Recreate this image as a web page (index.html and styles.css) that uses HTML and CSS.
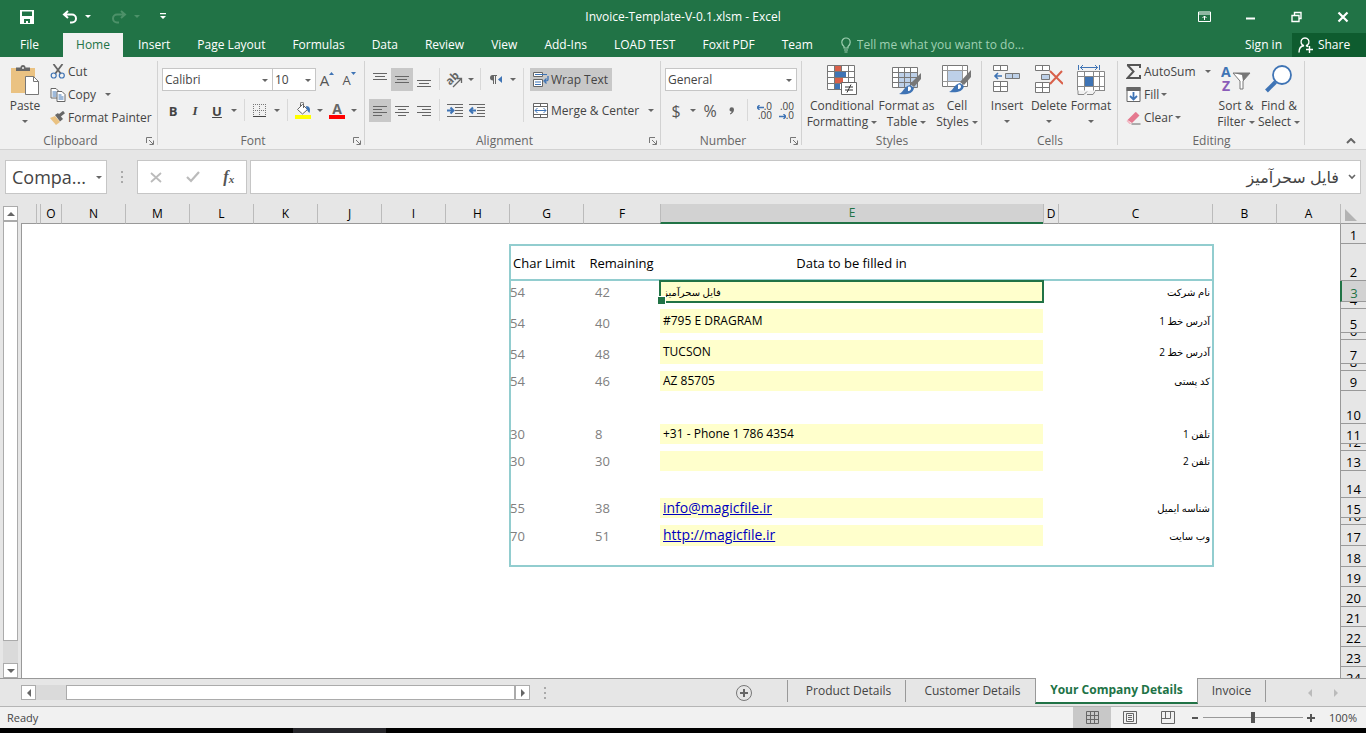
FILE: index.html
```html
<!DOCTYPE html>
<html lang="en">
<head>
    <meta charset="UTF-8">
    <meta name="viewport" content="width=device-width, initial-scale=1.0">
    <title>Invoice-Template-V-0.1.xlsm - Excel</title>
    <link rel="stylesheet" href="styles.css">
</head>
<body>
    <header class="titlebar">
        <div class="quick-access">
            <button class="tb-btn" aria-label="Save">
                <svg width="14" height="14" viewBox="0 0 14 14"><path d="M0 0h14v14H0z M2 1.500v4.500h10V1.500z M4 9v4h2v-2h2v2h2V9z" fill="#fff" fill-rule="evenodd"/></svg>
            </button>
            <button class="tb-btn undo" aria-label="Undo">
                <svg width="16" height="14" viewBox="0 0 16 14"><path d="M6 1L2 4.500l4 3.500M2 4.500h8a4 4 0 0 1 0 8H8" fill="none" stroke="#fff" stroke-width="2"/></svg>
                <i class="caret light"></i>
            </button>
            <button class="tb-btn redo" aria-label="Redo" disabled>
                <svg width="16" height="14" viewBox="0 0 16 14"><path d="M10 1l4 3.500L10 8M14 4.500H6a4 4 0 0 0 0 8h2" fill="none" stroke="#4d9169" stroke-width="2"/></svg>
                <i class="caret faint"></i>
            </button>
            <button class="tb-btn" aria-label="Customize Quick Access Toolbar">
                <svg width="7" height="7" viewBox="0 0 7 7"><path d="M0 0h6v1.300H0zM0 3h6L3 6z" fill="#fff"/></svg>
            </button>
        </div>
        <h1>Invoice-Template-V-0.1.xlsm - Excel</h1>
        <div class="window-buttons">
            <button aria-label="Ribbon Display Options">
                <svg width="14" height="12" viewBox="0 0 14 12"><path d="M.5 1h12v9.500H.5zM.5 3h12M6.500 9V5M4.500 7l2-2 2 2" fill="none" stroke="#fff"/></svg>
            </button>
            <button aria-label="Minimize">
                <svg width="10" height="12" viewBox="0 0 10 12"><path d="M0 7.500h9" stroke="#fff" stroke-width="2"/></svg>
            </button>
            <button aria-label="Restore">
                <svg width="12" height="12" viewBox="0 0 12 12"><path d="M1 4.500h7v6H1zM3.500 4V1.500H10v6H8.500" fill="none" stroke="#fff" stroke-width="1.400"/></svg>
            </button>
            <button aria-label="Close">
                <svg width="12" height="12" viewBox="0 0 12 12"><path d="M1.500 1.500l9 9M10.500 1.500l-9 9" stroke="#fff" stroke-width="2.200"/></svg>
            </button>
        </div>
    </header>

    <nav class="ribbon-tabs">
        <a href="#file" class="file">File</a>
        <a href="#home" class="active">Home</a>
        <a href="#insert">Insert</a>
        <a href="#layout">Page Layout</a>
        <a href="#formulas">Formulas</a>
        <a href="#data">Data</a>
        <a href="#review">Review</a>
        <a href="#view">View</a>
        <a href="#addins">Add-Ins</a>
        <a href="#load">LOAD TEST</a>
        <a href="#foxit">Foxit PDF</a>
        <a href="#team">Team</a>
        <label class="tell-me">
            <svg width="10" height="16" viewBox="0 0 10 16"><path d="M3 11V9.500C1.500 8.500.8 7 .8 5.200a4.200 4.200 0 0 1 8.400 0C9.200 7 8.500 8.500 7 9.500V11zM3 13h4M3.500 15h3" fill="none" stroke="#9fd0b2" stroke-width="1.200"/></svg>
            <input type="text" placeholder="Tell me what you want to do...">
        </label>
        <a href="#signin" class="signin">Sign in</a>
        <button class="share">
            <svg width="16" height="16" viewBox="0 0 16 16"><path d="M1 15.500C1 11 3 9 6 8.800a4 4 0 1 1 2 0c1 .2 1.700.6 2.200 1M8 12.500h7M11.500 9v7" fill="none" stroke="#fff" stroke-width="1.400"/></svg>
            Share
        </button>
    </nav>

    <section class="ribbon">
        <div class="group clipboard">
            <div class="tools">
                <button class="big paste">
                    <svg width="28" height="30" viewBox="0 0 28 30"><path d="M0 3h24v25H0z" fill="#eac282"/><path d="M5 6V2.500h4.500a2.500 2.500 0 0 1 5 0H19V6z" fill="#666"/><circle cx="12" cy="3" r="1" fill="#f1f1f1"/><path d="M14.500 11.500h8l5 5v13h-13z" fill="#fff" stroke="#777"/><path d="M22.500 11.500v5h5" fill="none" stroke="#777"/></svg>
                    <span>Paste</span>
                    <i class="caret"></i>
                </button>
                <div class="stack">
                    <button class="small">
                        <svg width="15" height="15" viewBox="0 0 15 15"><path d="M3 0l7.500 10M12 0L4.500 10" stroke="#666" stroke-width="1.800"/><circle cx="3.200" cy="11.500" r="2.500" fill="none" stroke="#3f74b5" stroke-width="1.200"/><circle cx="11.300" cy="11.500" r="2.500" fill="none" stroke="#3f74b5" stroke-width="1.200"/></svg>
                        Cut
                    </button>
                    <button class="small">
                        <svg width="15" height="14" viewBox="0 0 15 14"><path d="M.5.5h5l2.500 2.500v7H.5z" fill="#fff" stroke="#666"/><path d="M2 4h4M2 6h4M2 8h4" stroke="#3f74b5"/><path d="M6.500 3.500h5l3 3v7h-8z" fill="#fff" stroke="#666"/><path d="M8 7h3M8 9h5M8 11h5" stroke="#3f74b5"/></svg>
                        Copy <i class="caret copy-caret"></i>
                    </button>
                    <button class="small">
                        <svg width="16" height="14" viewBox="0 0 16 14"><path d="M0 7l5-2 5 6-4 3z" fill="#eac282"/><path d="M5 4l3-2 5 6-3 2.500z" fill="#666"/><path d="M9 5l5-4" stroke="#666" stroke-width="3"/></svg>
                        Format Painter
                    </button>
                </div>
            </div>
            <footer>Clipboard<svg class="launcher" viewBox="0 0 8 8"><path d="M.5 6V.5H6M3 3l4 4M7.500 3.500v4h-4" fill="none" stroke="#777"/></svg></footer>
        </div>

        <div class="group font">
            <div class="rows">
                <div class="row">
                    <label class="select font-name"><select aria-label="Font"><option>Calibri</option></select></label>
                    <label class="select font-size"><select aria-label="Font size"><option>10</option></select></label>
                    <button class="icon grow" aria-label="Increase Font Size"><span class="big-a">A</span><svg width="5" height="3" viewBox="0 0 5 3"><path d="M0 3h5L2.500 0z" fill="#3f74b5"/></svg></button>
                    <button class="icon grow" aria-label="Decrease Font Size"><span class="small-a">A</span><svg width="5" height="3" viewBox="0 0 5 3"><path d="M0 0h5L2.500 3z" fill="#3f74b5"/></svg></button>
                </div>
                <div class="row">
                    <button class="icon"><b>B</b></button>
                    <button class="icon"><em>I</em></button>
                    <button class="icon"><u>U</u></button>
                    <button class="drop" aria-label="Underline options"><i class="caret"></i></button>
                    <hr>
                    <button class="icon" aria-label="Borders">
                        <svg width="14" height="14" viewBox="0 0 14 14"><path d="M.5 0v13M6.500 0v13M12.500 0v13M0 .5h13M0 6.500h13" stroke="#777" stroke-dasharray="1 1"/><path d="M0 12.500h13" stroke="#444"/></svg>
                    </button>
                    <button class="drop" aria-label="Border options"><i class="caret"></i></button>
                    <hr>
                    <button class="icon" aria-label="Fill Color">
                        <svg width="16" height="17" viewBox="0 0 16 17"><path d="M2.500 7.500l5-5 5 5-5 4.500z" fill="#fff" stroke="#666"/><path d="M5.500 5V1.500a1.500 1.500 0 0 1 3 0V6" fill="none" stroke="#666"/><path d="M11 4c4 0 4.500 3 3.500 7-1-1-2-2-3-4z" fill="#3f74b5"/><path d="M0 13h16v4H0z" fill="#ff0"/></svg>
                    </button>
                    <button class="drop" aria-label="Fill options"><i class="caret"></i></button>
                    <button class="icon font-color" aria-label="Font Color">A</button>
                    <button class="drop" aria-label="Font Color options"><i class="caret"></i></button>
                </div>
            </div>
            <footer>Font<svg class="launcher" viewBox="0 0 8 8"><path d="M.5 6V.5H6M3 3l4 4M7.500 3.500v4h-4" fill="none" stroke="#777"/></svg></footer>
        </div>

        <div class="group alignment">
            <div class="tools">
                <div class="rows">
                    <div class="row">
                        <button class="icon" aria-label="Top Align"><svg width="14" height="16" viewBox="0 0 14 16"><path d="M0 1.500h14M2 4.500h10M0 7.500h14" stroke="#666"/></svg></button>
                        <button class="icon on" aria-label="Middle Align"><svg width="14" height="16" viewBox="0 0 14 16"><path d="M0 4.500h14M2 7.500h10M0 10.500h14" stroke="#666"/></svg></button>
                        <button class="icon" aria-label="Bottom Align"><svg width="14" height="16" viewBox="0 0 14 16"><path d="M0 8.500h14M2 11.500h10M0 14.500h14" stroke="#666"/></svg></button>
                        <hr>
                        <button class="icon" aria-label="Orientation"><svg width="20" height="20" viewBox="0 0 20 20"><text x="1" y="14" transform="rotate(-45 5 10)" class="orient">ab</text><path d="M8 17l8-8M12 8.500H16.500V13" fill="none" stroke="#666" stroke-width="1.300"/></svg></button>
                        <button class="drop narrow" aria-label="Orientation options"><i class="caret"></i></button>
                        <hr>
                        <button class="icon" aria-label="Text Direction"><svg width="14" height="10" viewBox="0 0 14 10"><path d="M3.500 0H8v1H7v8H6V1H5v8H4V5.500C2 5.500 1 4.500 1 2.800S2 0 3.500 0z" fill="#666"/><path d="M13 1v7L9 4.500z" fill="#3f74b5"/></svg></button>
                        <button class="drop" aria-label="Text Direction options"><i class="caret"></i></button>
                    </div>
                    <div class="row">
                        <button class="icon on" aria-label="Align Left"><svg width="14" height="12" viewBox="0 0 14 12"><path d="M0 1.500h14M0 4.500h9M0 7.500h14M0 10.500h9" stroke="#666"/></svg></button>
                        <button class="icon" aria-label="Center"><svg width="14" height="12" viewBox="0 0 14 12"><path d="M0 1.500h14M3 4.500h8M0 7.500h14M3 10.500h8" stroke="#666"/></svg></button>
                        <button class="icon" aria-label="Align Right"><svg width="14" height="12" viewBox="0 0 14 12"><path d="M0 1.500h14M5 4.500h9M0 7.500h14M5 10.500h9" stroke="#666"/></svg></button>
                        <hr>
                        <button class="icon" aria-label="Decrease Indent"><svg width="16" height="13" viewBox="0 0 16 13"><path d="M0 .5h16M8 3.500h8M8 6.500h8M8 9.500h8M0 12.500h16" stroke="#666"/><path d="M0 6.500h6M3.500 3.500l3 3-3 3" fill="none" stroke="#3f74b5" stroke-width="2"/></svg></button>
                        <button class="icon" aria-label="Increase Indent"><svg width="16" height="13" viewBox="0 0 16 13"><path d="M0 .5h16M8 3.500h8M8 6.500h8M8 9.500h8M0 12.500h16" stroke="#666"/><path d="M1 6.500h6M4 3.500l-3 3 3 3" fill="none" stroke="#3f74b5" stroke-width="2"/></svg></button>
                    </div>
                </div>
                <hr class="long">
                <div class="rows wide">
                    <button class="small on">
                        <svg width="16" height="15" viewBox="0 0 16 15"><path d="M.5.5h9v4h-9zM.5 7.500h9v7h-9z" fill="#fff" stroke="#666"/><path d="M2 2.500h12M2 10h6M2 12.500h6" stroke="#3f74b5"/><path d="M15 4v3.500c0 1-1 1.500-3 1.500M13.500 6.500L11 9l2.500 2.500" fill="none" stroke="#3f74b5" stroke-width="1.300"/></svg>
                        Wrap Text
                    </button>
                    <button class="small">
                        <svg width="16" height="15" viewBox="0 0 16 15"><path d="M.5.5h14v14H.5zM.5 3.500h14M.5 11.500h14M7.500.5v3M7.500 11.500v3" fill="#fff" stroke="#666"/><path d="M2 7.500h11M4.500 5l-2.500 2.500L4.500 10M10.500 5l2.500 2.500-2.500 2.500" fill="none" stroke="#3f74b5"/></svg>
                        Merge &amp; Center <i class="caret merge-caret"></i>
                    </button>
                </div>
            </div>
            <footer>Alignment<svg class="launcher" viewBox="0 0 8 8"><path d="M.5 6V.5H6M3 3l4 4M7.500 3.500v4h-4" fill="none" stroke="#777"/></svg></footer>
        </div>

        <div class="group number">
            <div class="rows">
                <div class="row">
                    <label class="select format"><select aria-label="Number format"><option>General</option></select></label>
                </div>
                <div class="row">
                    <button class="icon sign">$</button>
                    <button class="drop" aria-label="Accounting options"><i class="caret"></i></button>
                    <button class="icon sign">%</button>
                    <button class="icon" aria-label="Comma Style"><svg width="6" height="8" viewBox="0 0 6 8"><path d="M.5 2.500a2 2 0 0 1 4.500 0C5 5 3.500 6.500 1 7.500v-1c1-.5 1.500-1 1.500-2C1 4.500.5 3.500.5 2.500z" fill="#666"/></svg></button>
                    <hr>
                    <button class="icon decimal" aria-label="Increase Decimal">
                        <span><svg width="7" height="5" viewBox="0 0 7 5"><path d="M0 2.500h7M2.500 0L0 2.500 2.500 5" fill="none" stroke="#3f74b5" stroke-width="1.300"/></svg>.0</span><span>.00</span>
                    </button>
                    <button class="icon decimal" aria-label="Decrease Decimal">
                        <span>.00</span><span><svg width="7" height="5" viewBox="0 0 7 5"><path d="M0 2.500h7M4.500 0L7 2.500 4.500 5" fill="none" stroke="#3f74b5" stroke-width="1.300"/></svg>.0</span>
                    </button>
                </div>
            </div>
            <footer>Number<svg class="launcher" viewBox="0 0 8 8"><path d="M.5 6V.5H6M3 3l4 4M7.500 3.500v4h-4" fill="none" stroke="#777"/></svg></footer>
        </div>

        <div class="group styles">
            <div class="tools">
                <button class="big conditional">
                    <svg width="30" height="30" viewBox="0 0 30 30"><path d="M.5.5h27v24H.5z" fill="#fff"/><path d="M8 1h6v5H8zM8 13h8v5H8z" fill="#d9604a"/><path d="M8 7h11v5H8zM8 19h5v5H8z" fill="#3f74b5"/><path d="M.5.5h27v24H.5zM.5 6.500h27M.5 12.500h27M.5 18.500h27M7.500.5v24M14.500.5v6M21.500.5v24" fill="none" stroke="#777"/><path d="M14.500 17.500h15v12h-15z" fill="#fff" stroke="#666"/><path d="M18 22h8M18 25h8M24 19.500l-4 8" stroke="#333"/></svg>
                    <span>Conditional</span>
                    <span>Formatting <i class="caret"></i></span>
                </button>
                <button class="big format-table">
                    <svg width="30" height="30" viewBox="0 0 30 30"><path d="M.5 2.500h25v20H.5z" fill="#fff"/><path d="M7 8h18v14H7z" fill="#bdd0e8"/><path d="M.5 2.500h25v20H.5zM.5 7.500h25M.5 12.500h25M.5 17.500h25M6.500 2.500v20M12.500 2.500v20M18.500 2.500v20" fill="none" stroke="#777"/><path d="M29 8v6l-7 8-4-3z" fill="#777"/><path d="M18 20l4 3c-1 6-8 7-15 6 4-1 5-8 11-9z" fill="#3f74b5"/><path d="M16 22c2-1 3 0 3 2-1 2-2 2-3 2z" fill="#fff"/></svg>
                    <span>Format as</span>
                    <span>Table <i class="caret"></i></span>
                </button>
                <button class="big cell-styles">
                    <svg width="30" height="30" viewBox="0 0 30 30"><path d="M.5.5h25v21H.5z" fill="#fff" stroke="#777"/><path d="M6 6h14v10H6z" fill="#bdd0e8"/><path d="M.5 5.500h25M.5 16.500h25M5.500.5v21M20.500.5v21" stroke="#999"/><path d="M29 5v7l-7 8-4-3z" fill="#777"/><path d="M18 18l4 3c-1 6-8 7-15 6 4-1 5-8 11-9z" fill="#3f74b5"/><path d="M16 20c2-1 3 0 3 2-1 2-2 2-3 2z" fill="#fff"/></svg>
                    <span>Cell</span>
                    <span>Styles <i class="caret"></i></span>
                </button>
            </div>
            <footer>Styles</footer>
        </div>

        <div class="group cells">
            <div class="tools">
                <button class="big">
                    <svg width="28" height="30" viewBox="0 0 28 30"><path d="M.5.5h14v5H.5zM7.500.5v5M.5 16.500h14v10H.5zM.5 21.500h14M7.500 16.500v10" fill="#fff" stroke="#777"/><path d="M12.500 8.500h14v5h-14z" fill="#bdd0e8" stroke="#777"/><path d="M19.500 8.500v5" stroke="#777"/><path d="M2 11h7M5 8l-3 3 3 3" fill="none" stroke="#3f74b5" stroke-width="1.600"/></svg>
                    <span>Insert</span>
                    <i class="caret"></i>
                </button>
                <button class="big">
                    <svg width="28" height="30" viewBox="0 0 28 30"><path d="M.5.5h14v5H.5zM7.500.5v5M.5 17.500h14v10H.5zM.5 22.500h14M7.500 17.500v10" fill="#fff" stroke="#777"/><path d="M6.500 9.500h8v5h-8z" fill="#bdd0e8" stroke="#777"/><path d="M15 6l13 13M27 6L15 19" stroke="#d9604a" stroke-width="2"/></svg>
                    <span>Delete</span>
                    <i class="caret"></i>
                </button>
                <button class="big">
                    <svg width="28" height="30" viewBox="0 0 28 30"><path d="M.5 6.500h27v19H.5z" fill="#fff"/><path d="M8 12h8v9H8z" fill="#3f74b5"/><path d="M.5 25.500v-19h27v19M.5 11.500h27M.5 21.500h27M7.500 6.500v19M16.500 6.500v19M22.500 6.500v19M1 25.500v4h6l3-3M10 29.500h6l2-3M18 25.500h10" fill="none" stroke="#888"/><path d="M1.500 0v5M22.500 0v5M3 2.500h18M6 0L3.500 2.500 6 5M18 0l2.500 2.500L18 5" fill="none" stroke="#3f74b5"/></svg>
                    <span>Format</span>
                    <i class="caret"></i>
                </button>
            </div>
            <footer>Cells</footer>
        </div>

        <div class="group editing">
            <div class="tools">
                <div class="stack">
                    <button class="small">
                        <svg width="16" height="15" viewBox="0 0 16 15"><path d="M1 1h13v3M1.500 1l6 6.500-6 6.500H14v-3" fill="none" stroke="#555" stroke-width="2"/></svg>
                        AutoSum <i class="caret sum-caret"></i>
                    </button>
                    <button class="small">
                        <svg width="15" height="15" viewBox="0 0 15 15"><path d="M.5.5h13v14H.5z" fill="#fff" stroke="#666"/><path d="M0 0h14v4H0z" fill="#666"/><path d="M7 5v7M3.500 9L7 12.500 10.500 9" fill="none" stroke="#3f74b5" stroke-width="1.800"/></svg>
                        Fill<i class="caret"></i>
                    </button>
                    <button class="small">
                        <svg width="15" height="14" viewBox="0 0 15 14"><path d="M1 9l7.500-7.500a1 1 0 0 1 1.500 0l3 3L5.500 12z" fill="#e5798f"/><path d="M1 9l4 4H3L0 10z" fill="#f3b4c0"/><path d="M5 13h9" stroke="#666"/></svg>
                        Clear<i class="caret"></i>
                    </button>
                </div>
                <button class="big sort">
                    <svg width="30" height="30" viewBox="0 0 30 30"><text x="0" y="12" class="sort-a">A</text><text x="1" y="26" class="sort-z">Z</text><path d="M12 8h17l-7 8v8h-3v-8z" fill="#fff" stroke="#777"/><path d="M12 8h17l-7 8-1-6z" fill="#777"/></svg>
                    <span>Sort &amp;</span>
                    <span>Filter <i class="caret"></i></span>
                </button>
                <button class="big find">
                    <svg width="28" height="30" viewBox="0 0 28 30"><circle cx="17" cy="10" r="9" fill="#fff" stroke="#3f74b5" stroke-width="1.800"/><path d="M1.500 26L10.500 17" stroke="#3f74b5" stroke-width="4"/></svg>
                    <span>Find &amp;</span>
                    <span>Select <i class="caret"></i></span>
                </button>
            </div>
            <footer>Editing</footer>
        </div>
        <button class="collapse" aria-label="Collapse the Ribbon">
            <svg width="10" height="6" viewBox="0 0 10 6"><path d="M1 5l4-4 4 4" fill="none" stroke="#666" stroke-width="2"/></svg>
        </button>
    </section>

    <section class="formula-bar">
        <label class="select name-box"><select aria-label="Name Box"><option>Compa...</option></select></label>
        <i class="dots"></i>
        <div class="formula-buttons">
            <button aria-label="Cancel"><svg width="12" height="11" viewBox="0 0 12 11"><path d="M1 1l10 9M11 1L1 10" stroke="#bbb" stroke-width="1.800"/></svg></button>
            <button aria-label="Enter"><svg width="14" height="12" viewBox="0 0 14 12"><path d="M1 6l4 4 8-9" fill="none" stroke="#bbb" stroke-width="2.200"/></svg></button>
            <button class="fx" aria-label="Insert Function">f<small>x</small></button>
        </div>
        <div class="formula-input">
            <input type="text" dir="rtl" aria-label="Formula" value="فایل سحرآمیز">
            <svg width="8" height="6" viewBox="0 0 8 6"><path d="M1 1l3 3 3-3" fill="none" stroke="#666" stroke-width="1.600"/></svg>
        </div>
    </section>

    <main class="workspace">
        <div class="vscroll">
            <button aria-label="Scroll up"><i class="arrow up"></i></button>
            <div class="track"><div class="thumb"></div></div>
            <button aria-label="Scroll down"><i class="arrow down"></i></button>
        </div>
        <div class="sheet">
            <table dir="rtl">
                <colgroup>
                    <col class="w-num"><col class="w-std"><col class="w-std"><col class="w-c"><col class="w-d"><col class="w-e"><col class="w-f"><col class="w-g">
                    <col class="w-std"><col class="w-std"><col class="w-std"><col class="w-std"><col class="w-std"><col class="w-std"><col class="w-std"><col class="w-o"><col class="w-p"><col>
                </colgroup>
                <thead>
                    <tr>
                        <th class="corner"><svg width="12" height="12" viewBox="0 0 12 12"><path d="M0 0v12h12z" fill="#b3b3b3"/></svg></th>
                        <th>A</th><th>B</th><th>C</th><th>D</th><th class="current">E</th><th>F</th><th>G</th><th>H</th><th>I</th><th>J</th><th>K</th><th>L</th><th>M</th><th>N</th><th>O</th><th></th><th></th>
                    </tr>
                </thead>
                <tbody>
                    <tr><th><span>1</span></th><td colspan="17"></td></tr>
                    <tr class="header-row"><th><span>2</span></th><td class="edge" colspan="2"></td><td class="label"></td><td></td><td class="title">Data to be filled in</td><td class="title">Remaining</td><td class="limit title">Char Limit</td><td colspan="10"></td></tr>
                    <tr class="h21"><th class="current"><span>3</span></th><td class="edge" colspan="2"></td><td class="label">نام شرکت</td><td></td><td class="field selected">فایل سحرآمیز</td><td class="remaining">42</td><td class="limit">54</td><td colspan="10"></td></tr>
                    <tr class="gap"><th><span>4</span></th><td class="edge" colspan="2"></td><td colspan="4"></td><td class="limit"></td><td colspan="10"></td></tr>
                    <tr class="h24"><th><span>5</span></th><td class="edge" colspan="2"></td><td class="label">آدرس خط 1</td><td></td><td class="field">#795 E DRAGRAM</td><td class="remaining">40</td><td class="limit">54</td><td colspan="10"></td></tr>
                    <tr class="gap"><th><span>6</span></th><td class="edge" colspan="2"></td><td colspan="4"></td><td class="limit"></td><td colspan="10"></td></tr>
                    <tr class="h24"><th><span>7</span></th><td class="edge" colspan="2"></td><td class="label">آدرس خط 2</td><td></td><td class="field">TUCSON</td><td class="remaining">48</td><td class="limit">54</td><td colspan="10"></td></tr>
                    <tr class="gap"><th><span>8</span></th><td class="edge" colspan="2"></td><td colspan="4"></td><td class="limit"></td><td colspan="10"></td></tr>
                    <tr><th><span>9</span></th><td class="edge" colspan="2"></td><td class="label">کد پستی</td><td></td><td class="field">AZ 85705</td><td class="remaining">46</td><td class="limit">54</td><td colspan="10"></td></tr>
                    <tr class="h33"><th><span>10</span></th><td class="edge" colspan="2"></td><td colspan="4"></td><td class="limit"></td><td colspan="10"></td></tr>
                    <tr><th><span>11</span></th><td class="edge" colspan="2"></td><td class="label">تلفن 1</td><td></td><td class="field">+31 - Phone 1 786 4354</td><td class="remaining">8</td><td class="limit">30</td><td colspan="10"></td></tr>
                    <tr class="gap"><th><span>12</span></th><td class="edge" colspan="2"></td><td colspan="4"></td><td class="limit"></td><td colspan="10"></td></tr>
                    <tr><th><span>13</span></th><td class="edge" colspan="2"></td><td class="label">تلفن 2</td><td></td><td class="field"></td><td class="remaining">30</td><td class="limit">30</td><td colspan="10"></td></tr>
                    <tr class="h27"><th><span>14</span></th><td class="edge" colspan="2"></td><td colspan="4"></td><td class="limit"></td><td colspan="10"></td></tr>
                    <tr><th><span>15</span></th><td class="edge" colspan="2"></td><td class="label">شناسه ایمیل</td><td></td><td class="field"><a href="mailto:info@magicfile.ir">info@magicfile.ir</a></td><td class="remaining">38</td><td class="limit">55</td><td colspan="10"></td></tr>
                    <tr class="gap"><th><span>16</span></th><td class="edge" colspan="2"></td><td colspan="4"></td><td class="limit"></td><td colspan="10"></td></tr>
                    <tr class="h21"><th><span>17</span></th><td class="edge" colspan="2"></td><td class="label">وب سایت</td><td></td><td class="field"><a href="http://magicfile.ir">http://magicfile.ir</a></td><td class="remaining">51</td><td class="limit">70</td><td colspan="10"></td></tr>
                    <tr class="last h21"><th><span>18</span></th><td class="edge" colspan="2"></td><td colspan="4"></td><td class="limit"></td><td colspan="10"></td></tr>
                    <tr><th><span>19</span></th><td colspan="17"></td></tr>
                    <tr><th><span>20</span></th><td colspan="17"></td></tr>
                    <tr><th><span>21</span></th><td colspan="17"></td></tr>
                    <tr><th><span>22</span></th><td colspan="17"></td></tr>
                    <tr><th><span>23</span></th><td colspan="17"></td></tr>
                    <tr><th><span>24</span></th><td colspan="17"></td></tr>
                </tbody>
            </table>
        </div>
    </main>

    <div class="sheet-bar">
        <div class="hscroll">
            <button aria-label="Scroll left"><i class="arrow left"></i></button>
            <div class="track"><div class="thumb"></div></div>
            <button aria-label="Scroll right"><i class="arrow right"></i></button>
        </div>
        <i class="dots"></i>
        <button class="add-sheet" aria-label="New sheet">
            <svg width="16" height="16" viewBox="0 0 16 16"><circle cx="8" cy="8" r="7.500" fill="none" stroke="#777"/><path d="M8 4v8M4 8h8" stroke="#666" stroke-width="2"/></svg>
        </button>
        <nav class="sheet-tabs">
            <a href="#product" class="product">Product Details</a>
            <a href="#customer" class="customer">Customer Details</a>
            <a href="#company" class="active">Your Company Details</a>
            <a href="#invoice" class="invoice">Invoice</a>
        </nav>
        <div class="tab-arrows">
            <button aria-label="Previous sheet"><i class="arrow left"></i></button>
            <button aria-label="Next sheet"><i class="arrow right"></i></button>
        </div>
    </div>

    <footer class="status-bar">
        <span class="ready">Ready</span>
        <button class="view on" aria-label="Normal"><svg width="13" height="13" viewBox="0 0 13 13"><path d="M.5.5h12v12H.5zM.5 4.500h12M.5 8.500h12M4.500.5v12M8.500.5v12" fill="none" stroke="#666"/></svg></button>
        <button class="view" aria-label="Page Layout"><svg width="14" height="13" viewBox="0 0 14 13"><path d="M.5.5h13v12H.5zM3.500 2.500h7v8h-7zM5 4.500h4M5 6.500h4M5 8.500h4" fill="none" stroke="#666"/></svg></button>
        <button class="view" aria-label="Page Break Preview"><svg width="14" height="13" viewBox="0 0 14 13"><path d="M.5.5h13v12H.5zM4.500.5v7M9.500.5v7M.5 7.500h9" fill="none" stroke="#666"/></svg></button>
        <button class="zoom-btn" aria-label="Zoom out"><svg width="8" height="8" viewBox="0 0 8 8"><path d="M1 4h6" stroke="#555" stroke-width="2"/></svg></button>
        <input type="range" aria-label="Zoom" min="0" max="200" value="100">
        <button class="zoom-btn" aria-label="Zoom in"><svg width="8" height="8" viewBox="0 0 8 8"><path d="M0 4h8M4 0v8" stroke="#555" stroke-width="2"/></svg></button>
        <span class="zoom-value">100%</span>
    </footer>
    <div class="taskbar"><i></i></div>
</body>
</html>
```

FILE: styles.css
```css
:root {
    --green: #217346;
    --dark-green: #0e5c2f;
    --ribbon: #f1f1f1;
    --grey: #e6e6e6;
    --line: #ababab;
    --text: #444;
    --table-line: #92cdcf;
    --field: #ffffcc;
}

* {
    margin: 0;
    padding: 0;
    box-sizing: border-box;
}

body {
    font-family: "Open Sans", "DejaVu Sans", sans-serif;
    font-size: 12px;
    line-height: 16px;
    color: var(--text);
    background: var(--grey);
    height: 100vh;
    display: flex;
    flex-direction: column;
    overflow: hidden;
}

button {
    border: none;
    background: none;
    font: inherit;
    color: inherit;
    display: flex;
    align-items: center;
    justify-content: center;
}

input,
select {
    border: none;
    background: none;
    font: inherit;
    color: inherit;
    outline: none;
    appearance: none;
}

a {
    color: inherit;
    text-decoration: none;
}

svg {
    flex: none;
}

.caret {
    display: inline-block;
    flex: none;
    border: 3px solid transparent;
    border-top-color: #666;
    border-bottom: none;
    vertical-align: middle;
}

.caret.light {
    border-top-color: #fff;
}

.caret.faint {
    border-top-color: #4d9169;
}

/* title bar */
.titlebar {
    display: grid;
    grid-template-columns: 1fr auto 1fr;
    align-items: center;
    height: 33px;
    flex: none;
    background: var(--green);
    color: #fff;
}

.titlebar h1 {
    font-size: 12px;
    font-weight: normal;
}

.quick-access {
    display: flex;
    align-items: center;
    padding-left: 20px;
    gap: 20px;
}

.quick-access .tb-btn {
    gap: 7px;
}

.quick-access .undo {
    margin-left: 8px;
}

.window-buttons {
    display: flex;
    justify-content: flex-end;
}

.window-buttons button {
    width: 46px;
    height: 30px;
}

/* ribbon tabs */
.ribbon-tabs {
    display: flex;
    align-items: stretch;
    height: 24px;
    flex: none;
    background: var(--green);
    color: #fff;
    line-height: 24px;
    white-space: nowrap;
}

.ribbon-tabs a {
    padding: 0 12px 0 15px;
}

.ribbon-tabs .file {
    width: 63px;
    padding: 0 0 0 20px;
}

.ribbon-tabs .active {
    background: var(--ribbon);
    color: var(--green);
    width: 60px;
    text-align: center;
    padding: 0;
}

.tell-me {
    display: flex;
    align-items: center;
    gap: 6px;
    padding-left: 16px;
    flex: 1;
}

.tell-me input {
    width: 200px;
}

.tell-me input::placeholder {
    color: #9fd0b2;
    opacity: 1;
}

.ribbon-tabs .signin {
    padding: 0 10px;
}

.share {
    width: 74px;
    padding-right: 10px;
    background: var(--dark-green);
    gap: 4px;
}

/* ribbon */
.ribbon {
    display: flex;
    flex: none;
    height: 93px;
    background: var(--ribbon);
    border-bottom: 1px solid #d2d2d2;
    white-space: nowrap;
}

.group {
    display: flex;
    flex-direction: column;
    position: relative;
    flex: none;
    padding-top: 4px;
}

.group::after {
    content: "";
    position: absolute;
    right: 0;
    top: 4px;
    bottom: 4px;
    border-right: 1px solid #d2d2d2;
}

.group footer {
    margin-top: auto;
    text-align: center;
    color: #666;
    line-height: 16px;
}

.clipboard footer,
.font footer,
.alignment footer,
.number footer {
    padding-right: 17px;
}

.launcher {
    position: absolute;
    right: 4px;
    bottom: 4px;
    width: 8px;
    height: 8px;
}

.clipboard { width: 158px; }
.font { width: 207px; }
.alignment { width: 296px; }
.number { width: 141px; }
.styles { width: 180px; }
.cells { width: 136px; }
.editing { width: 187px; }

.tools {
    display: flex;
}

.stack {
    display: flex;
    flex-direction: column;
    align-items: flex-start;
}

.small {
    height: 23px;
    gap: 2px;
    justify-content: flex-start;
}

.stack .small svg {
    width: 16px;
}

.clipboard .stack,
.editing .stack {
    margin-top: -1px;
}

.copy-caret,
.sum-caret,
.merge-caret {
    margin-left: 7px;
}

.big {
    flex-direction: column;
    justify-content: flex-start;
    height: 72px;
    padding-top: 4px;
}

.big svg {
    margin-bottom: 3px;
    height: 30px;
}

.big > .caret {
    margin-top: 6px;
}

.paste {
    width: 50px;
}

.rows {
    display: flex;
    flex-direction: column;
    align-items: flex-start;
    gap: 8px;
    padding: 7px 0 0 4px;
}

.row {
    display: flex;
    height: 23px;
}

.icon {
    width: 22px;
    height: 23px;
}

.drop {
    width: 12px;
    height: 23px;
}

.drop.narrow {
    width: 10px;
}

.on {
    background: #c8c8c8;
}

hr {
    border: none;
    width: 1px;
    height: 22px;
    margin: 0 4px;
    background: #d8d8d8;
}

.long {
    height: 54px;
    margin-top: 7px;
}

.select {
    display: flex;
    position: relative;
    background: #fff;
    border: 1px solid #c6c6c6;
}

.select select {
    width: 100%;
    padding-left: 2px;
}

.select::after {
    content: "";
    position: absolute;
    right: 4px;
    top: calc(50% - 1px);
    border: 3px solid transparent;
    border-top-color: #666;
    border-bottom: none;
}

.font-name {
    width: 111px;
}

.font-size {
    width: 43px;
    border-left: none;
}

.grow {
    align-items: center;
    color: #555;
}

.grow svg {
    margin-bottom: 12px;
}

.big-a {
    font-size: 15px;
}

.small-a {
    font-size: 13px;
}

.icon b,
.icon em,
.icon u {
    font-weight: bold;
    font-size: 13px;
}

.icon em {
    font-family: "Liberation Serif", serif;
}

.font-color {
    font-size: 14px;
    font-weight: bold;
    line-height: 13px;
    color: #666;
    background: linear-gradient(#f00, #f00) 3px 16px / 16px 4px no-repeat;
    padding-bottom: 4px;
}

.orient {
    font-size: 11px;
    font-weight: bold;
    fill: #666;
}

.rows.wide {
    padding-left: 2px;
}

.rows.wide .small {
    padding: 0 4px 0 3px;
}

.format {
    width: 132px;
}

.sign {
    font-size: 16px;
    color: #555;
}

.decimal {
    flex-direction: column;
    align-items: flex-end;
    font-size: 10px;
    line-height: 9px;
    padding-right: 2px;
}

.styles .tools {
    padding-left: 4px;
}

.conditional { width: 72px; }
.format-table { width: 57px; }
.cell-styles { width: 44px; }

.cells .tools {
    padding-left: 4px;
}

.cells .big {
    width: 42px;
}

.editing .tools {
    padding-left: 8px;
}

.editing .stack {
    width: 88px;
}

.sort {
    width: 44px;
}

.find {
    width: 42px;
}

.sort-a,
.sort-z {
    font-size: 14px;
    font-weight: bold;
    fill: #3f74b5;
}

.sort-z {
    fill: #8a5cb8;
}

.collapse {
    margin: auto 10px 5px auto;
}

/* formula bar */
.formula-bar {
    display: flex;
    flex: none;
    height: 54px;
    padding: 10px 5px;
}

.name-box {
    width: 102px;
    height: 34px;
    font-size: 18px;
    line-height: 32px;
}

.name-box select {
    padding-left: 6px;
}

.dots {
    width: 2px;
    height: 12px;
    background: repeating-linear-gradient(#aaa 0 2px, transparent 2px 5px);
}

.formula-bar .dots {
    margin: 11px 14px;
}

.formula-buttons {
    display: flex;
    justify-content: space-around;
    width: 110px;
    height: 34px;
    background: #fff;
    border: 1px solid #c6c6c6;
}

.fx {
    font: italic bold 16px "Liberation Serif", serif;
    color: #555;
}

.fx small {
    font-size: 11px;
    margin-top: 4px;
}

.formula-input {
    display: flex;
    align-items: center;
    flex: 1;
    height: 34px;
    margin-left: 3px;
    padding-right: 4px;
    background: #fff;
    border: 1px solid #c6c6c6;
}

.formula-input input {
    flex: 1;
    padding-right: 9px;
    font-size: 16px;
    line-height: 24px;
}

/* workspace */
.workspace {
    display: flex;
    flex: 1;
    min-height: 0;
    border-bottom: 1px solid #999;
}

.vscroll {
    display: flex;
    flex-direction: column;
    width: 15px;
    margin: 2px 3px 0 3px;
}

.vscroll button,
.hscroll button {
    width: 15px;
    height: 15px;
    background: #fff;
    border: 1px solid var(--line);
    flex: none;
}

.track {
    flex: 1;
    background: #dadada;
}

.thumb {
    background: #fff;
    border: 1px solid var(--line);
}

.vscroll .thumb {
    height: 95%;
}

.arrow {
    border: 4px solid transparent;
}

.arrow.up { border-bottom-color: #666; border-top: none; }
.arrow.down { border-top-color: #666; border-bottom: none; }
.arrow.left { border-right-color: #666; border-left: none; }
.arrow.right { border-left-color: #666; border-right: none; }

.sheet {
    flex: 1;
    min-width: 0;
    overflow: hidden;
}

table {
    width: 100%;
    table-layout: fixed;
    border-collapse: separate;
    border-spacing: 0;
    font-size: 13px;
    line-height: 16px;
    color: #000;
}

.w-num { width: 26px; }
.w-std { width: 64px; }
.w-c { width: 154px; }
.w-d { width: 15px; }
.w-e { width: 383px; }
.w-f { width: 77px; }
.w-g { width: 74px; }
.w-o { width: 21px; }
.w-p { width: 4px; }

thead th {
    height: 20px;
    font-weight: normal;
    font-size: 12px;
    border-bottom: 1px solid #999;
    border-left: 1px solid #bbb;
    overflow: hidden;
}

thead th:last-child {
    border-left: none;
}

thead .current {
    background: #d2d2d2;
    color: var(--green);
    border-bottom: 2px solid var(--green);
}

.corner svg {
    display: block;
    margin: 3px 9px 0 auto;
}

tbody tr {
    --h: 20px;
}

tbody .header-row { --h: 37px; }
tbody .h21 { --h: 21px; }
tbody .h24 { --h: 24px; }
tbody .h27 { --h: 27px; }
tbody .h33 { --h: 33px; }
tbody .gap { --h: 7px; }

tbody td {
    height: var(--h);
    background: #fff;
}

tbody td:last-child {
    border-left: 1px solid #999;
}

tbody th {
    height: var(--h);
    font-weight: normal;
    background: var(--grey);
    border-left: 1px solid #999;
    border-bottom: 1px solid #999;
}

tbody th span {
    display: flex;
    align-items: flex-end;
    justify-content: center;
    height: calc(var(--h) - 1px);
    overflow: hidden;
}

tbody .current {
    background: #d2d2d2;
    color: var(--green);
    border-left: 2px solid var(--green);
}

.title {
    text-align: center;
    white-space: nowrap;
}

.edge {
    border-left: 2px solid var(--table-line);
}

.label {
    padding-right: 2px;
    font-size: 10px;
    line-height: 14px;
}

tbody .field {
    background: var(--field);
    direction: ltr;
    text-align: left;
    padding-left: 3px;
    font-size: 12px;
}

tbody .selected {
    position: relative;
    font-size: 10px;
}

.field a {
    font-size: 14px;
    color: #0000c0;
    text-decoration: underline;
}

.remaining,
.limit {
    direction: ltr;
    text-align: left;
    vertical-align: bottom;
    color: #808080;
}

.remaining,
.limit:not(.title):not(:empty) {
    padding-bottom: 2px;
}

.remaining {
    padding-left: 12px;
}

.limit {
    border-left: 2px solid var(--table-line);
    padding-left: 1px;
}

.limit.title {
    color: #000;
    vertical-align: middle;
    text-align: left;
    padding-left: 4px;
}

.header-row td:not(.edge):not(:last-child) {
    border-top: 2px solid var(--table-line);
    border-bottom: 2px solid var(--table-line);
}

.last td:not(.edge):not(:last-child) {
    border-bottom: 2px solid var(--table-line);
}

.selected::before {
    content: "";
    position: absolute;
    inset: -1px;
    border: 2px solid var(--green);
}

.selected::after {
    content: "";
    position: absolute;
    left: -3px;
    bottom: -3px;
    width: 7px;
    height: 7px;
    background: var(--green);
    border: 1px solid #fff;
}

/* sheet tabs */
.sheet-bar {
    display: flex;
    align-items: center;
    flex: none;
    height: 28px;
    padding-left: 21px;
    border-bottom: 1px solid #b5b5b5;
    white-space: nowrap;
}

.hscroll {
    display: flex;
    flex: 1;
}

.hscroll .thumb {
    height: 15px;
    margin-left: 30px;
}

.sheet-bar .dots {
    margin: 0 14px;
}

.add-sheet {
    margin: 0 35px 0 176px;
}

.sheet-tabs {
    display: flex;
    align-items: center;
    align-self: flex-start;
    line-height: 22px;
    margin-top: -1px;
}

.sheet-tabs a {
    text-align: center;
    border-left: 1px solid #999;
}

.sheet-tabs .product { width: 118px; padding-left: 4px; }
.sheet-tabs .customer { width: 130px; padding-left: 4px; }

.sheet-tabs .active {
    width: 163px;
    line-height: 24px;
    font-weight: bold;
    color: var(--green);
    background: #fff;
    border-right: 1px solid #999;
    border-bottom: 2px solid var(--green);
}

.sheet-tabs .invoice {
    width: 68px;
    border-left: none;
    border-right: 1px solid #999;
}

.tab-arrows {
    display: flex;
    gap: 22px;
    padding: 0 28px 0 42px;
}

.tab-arrows .left { border-right-color: #bbb; }
.tab-arrows .right { border-left-color: #bbb; }

/* status bar */
.status-bar {
    display: flex;
    align-items: center;
    flex: none;
    height: 21px;
    padding: 0 9px 0 7px;
    background: var(--ribbon);
    font-size: 11px;
}

.ready {
    flex: 1;
}

.view {
    width: 38px;
    height: 21px;
}

.zoom-btn {
    width: 16px;
}

.status-bar input {
    width: 100px;
    height: 12px;
    background: linear-gradient(#999, #999) center / 100% 1px no-repeat;
}

.status-bar input::-webkit-slider-thumb {
    appearance: none;
    width: 4px;
    height: 11px;
    background: #555;
}

.zoom-value {
    width: 38px;
    text-align: right;
}

.taskbar {
    flex: none;
    height: 5px;
    background: #000;
    padding-left: 293px;
}

.taskbar i {
    display: block;
    width: 93px;
    height: 5px;
    background: #26262a;
}
```
